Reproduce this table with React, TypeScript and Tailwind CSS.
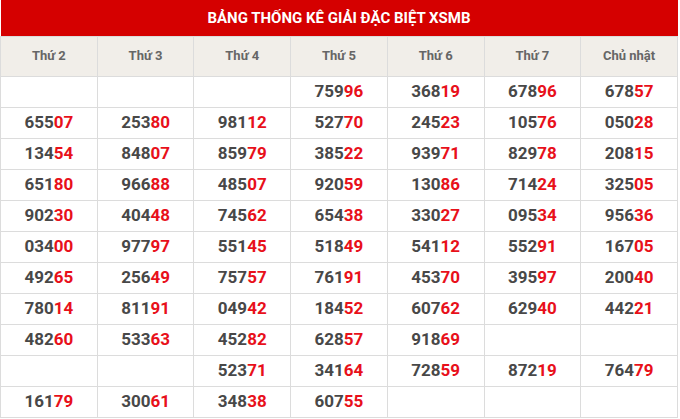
const days = ["Thứ 2", "Thứ 3", "Thứ 4", "Thứ 5", "Thứ 6", "Thứ 7", "Chủ nhật"];

const rows: string[][] = [
  ["", "", "", "75996", "36819", "67896", "67857"],
  ["65507", "25380", "98112", "52770", "24523", "10576", "05028"],
  ["13454", "84807", "85979", "38522", "93971", "82978", "20815"],
  ["65180", "96688", "48507", "92059", "13086", "71424", "32505"],
  ["90230", "40448", "74562", "65438", "33027", "09534", "95636"],
  ["03400", "97797", "55145", "51849", "54112", "55291", "16705"],
  ["49265", "25649", "75757", "76191", "45370", "39597", "20040"],
  ["78014", "81191", "04942", "18452", "60762", "62940", "44221"],
  ["48260", "53363", "45282", "62857", "91869", "", ""],
  ["", "", "52371", "34164", "72859", "87219", "76479"],
  ["16179", "30061", "34838", "60755", "", "", ""],
];

function Num({ value }: { value: string }) {
  if (!value) return null;
  return (
    <>
      {value.slice(0, 3)}
      <span className="text-[#e8101a]">{value.slice(3)}</span>
    </>
  );
}

export default function App() {
  return (
    <div className="w-[680px] bg-white font-['Roboto','Liberation_Sans',sans-serif]">
      <table className="w-[678px] table-fixed border-collapse">
        <thead>
          <tr>
            <th
              colSpan={7}
              className="h-[36px] bg-[#d50000] p-0 text-center text-[15px] font-bold text-white"
            >
              BẢNG THỐNG KÊ GIẢI ĐẶC BIỆT XSMB
            </th>
          </tr>
          <tr>
            {days.map((d) => (
              <th
                key={d}
                className="h-[40px] border border-[#dcdcdc] bg-[#f1eee9] p-0 text-center text-[13px] font-bold text-[#666]"
              >
                {d}
              </th>
            ))}
          </tr>
        </thead>
        <tbody>
          {rows.map((row, i) => (
            <tr key={i}>
              {row.map((v, j) => (
                <td
                  key={j}
                  className="h-[31px] border border-[#dcdcdc] p-0 text-center text-[17px] font-bold text-[#484848]"
                >
                  <Num value={v} />
                </td>
              ))}
            </tr>
          ))}
        </tbody>
      </table>
    </div>
  );
}
